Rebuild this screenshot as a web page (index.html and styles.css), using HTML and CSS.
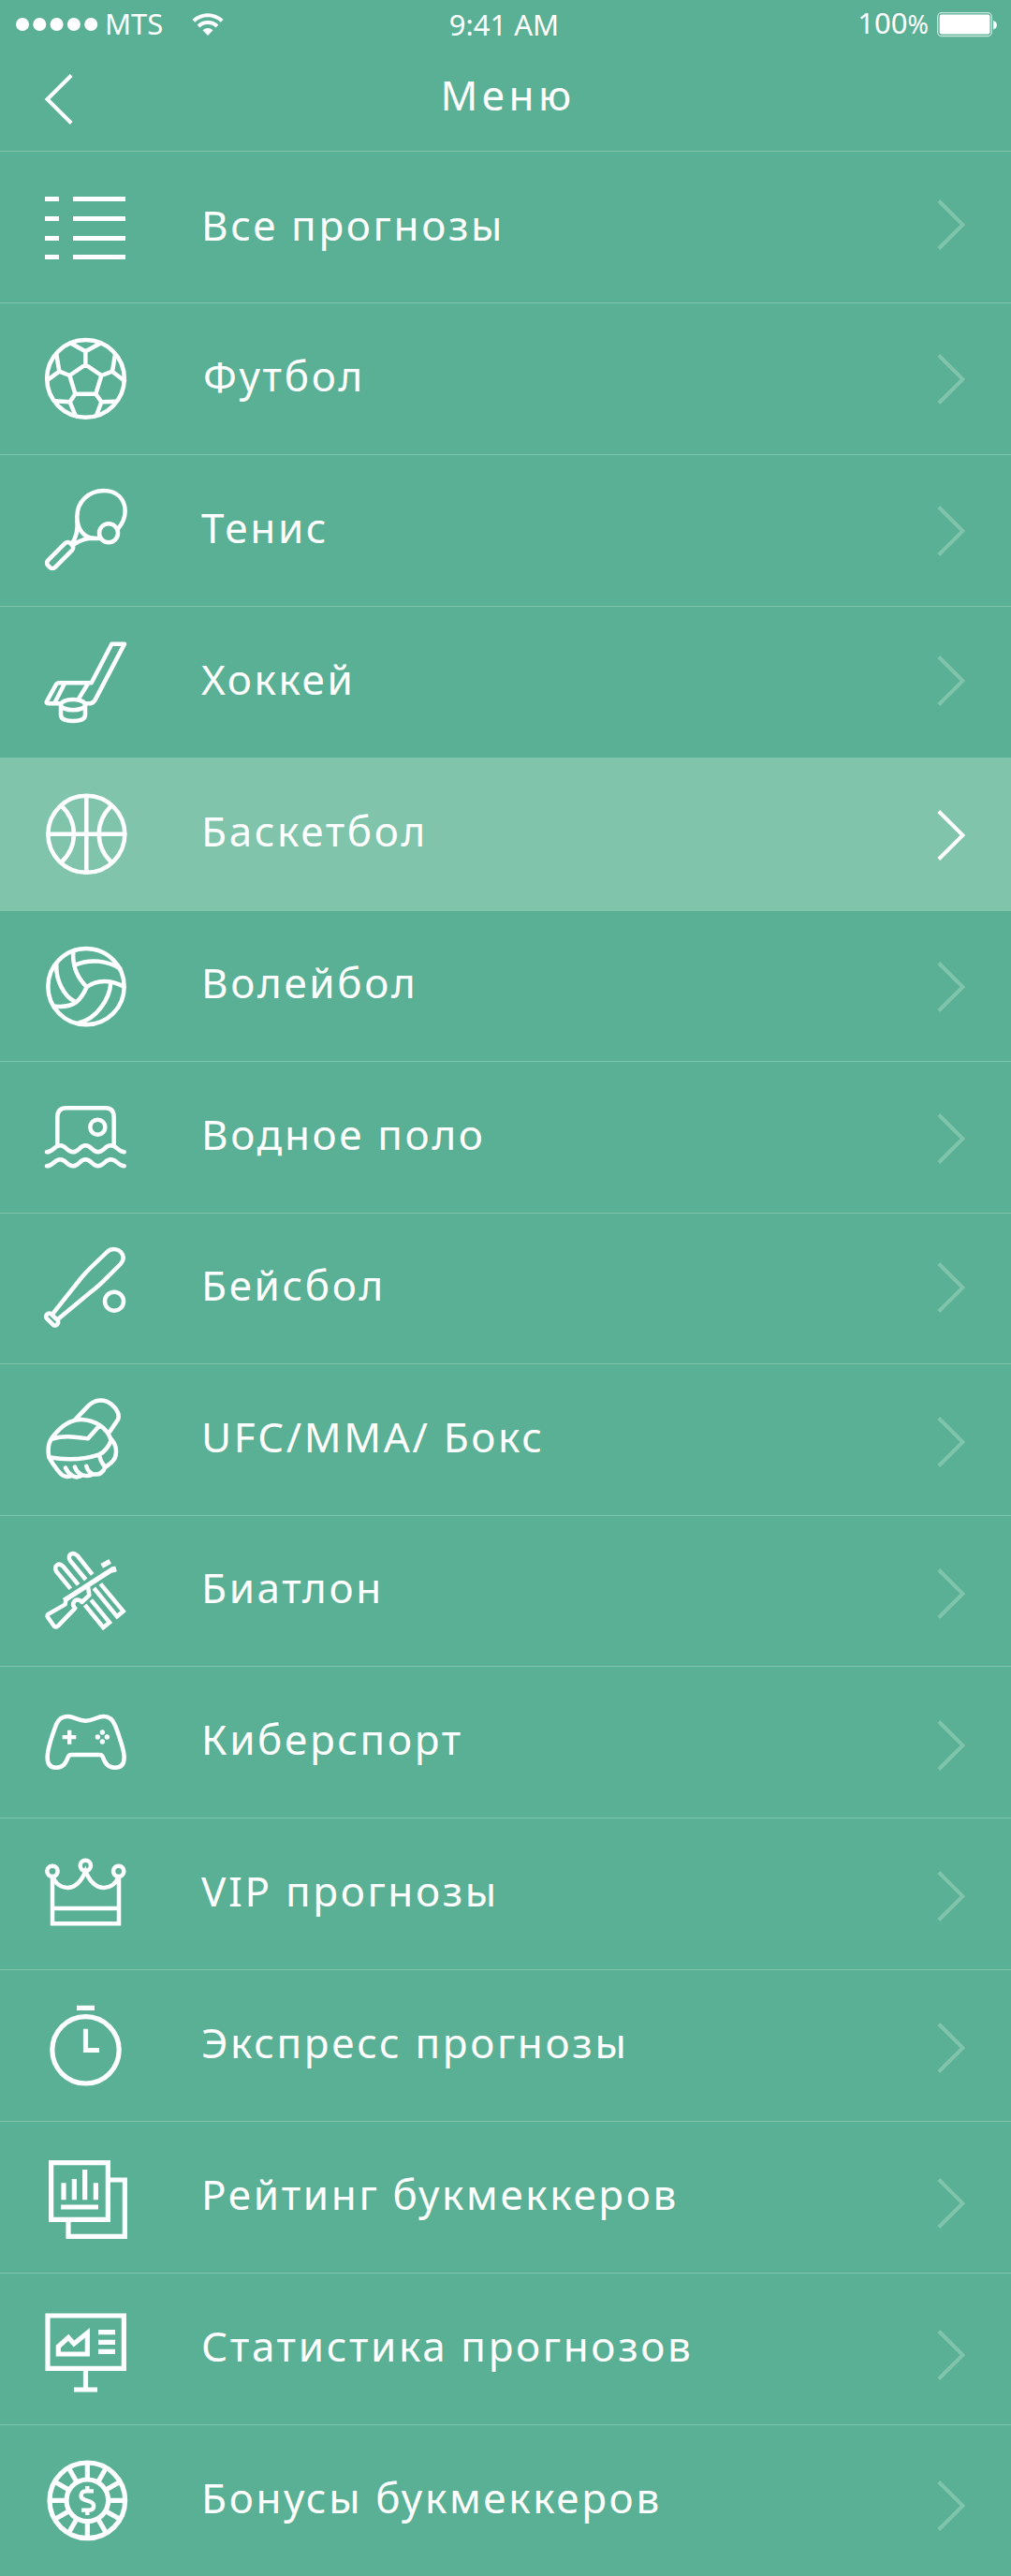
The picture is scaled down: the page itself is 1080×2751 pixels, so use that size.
FILE: index.html
```html
<!DOCTYPE html>
<html lang="ru">
<head>
<meta charset="utf-8">
<title>Меню</title>
<link rel="stylesheet" href="styles.css">
</head>
<body>
<svg class="defs" width="0" height="0" aria-hidden="true">
  <symbol id="chevron" viewBox="0 0 30 54"><path d="M1.8 1.5 27.5 27 1.8 52.5"/></symbol>
</svg>
<header class="header">
  <div class="status">
    <div class="status-left">
      <svg class="signal" viewBox="0 0 88 14"><circle cx="7" cy="7" r="7"/><circle cx="25.3" cy="7" r="7"/><circle cx="43.6" cy="7" r="7"/><circle cx="61.9" cy="7" r="7"/><circle cx="80.2" cy="7" r="7"/></svg>
      <span class="carrier">MTS</span>
      <svg class="wifi" viewBox="0 0 34 24"><path class="wifi-arc" d="M1.8 8.3C10.500.2 23.500.2 32.200 8.300M7 14C12.500 8.800 21.500 8.800 27 14"/><path class="wifi-dot" d="M11.500 18.300Q17 13.800 22.500 18.300L17 24Z"/></svg>
    </div>
    <span class="time">9:41 AM</span>
    <div class="status-right">
      <span class="charge">100<small>%</small></span>
      <svg class="battery" viewBox="0 0 65 27"><rect class="battery-case" x=".7" y=".7" width="57.600" height="24.800" rx="4"/><rect x="2.700" y="2.600" width="53.800" height="21" rx="2"/><path d="M60 9C65.200 10 65.200 17.500 60 18.500Z"/></svg>
    </div>
  </div>
  <nav class="bar">
    <svg class="back" viewBox="0 0 30 54"><path d="M28.200 1.500 2.500 27 28.200 52.500"/></svg>
    <h1 class="title">Меню</h1>
  </nav>
</header>
<ul class="menu">
  <li class="item">
    <svg class="icon solid" viewBox="45 196 92 92"><path d="M48 210h15v5h-15zM78 210h56v5h-56zM48 231h15v5h-15zM78 231h56v5h-56zM48 252h15v5h-15zM78 252h56v5h-56zM48 272h15v5h-15zM78 272h56v5h-56z"/></svg>
    <span class="label">Все прогнозы</span><svg class="chevron"><use href="#chevron"/></svg>
  </li>
  <li class="item">
    <svg class="icon" viewBox="135 84 276 276"><circle cx="274.500" cy="223" r="124"/><path d="M274 178 325 213 307 272H241L223 213ZM274 178V136L228 110M274 136 321 110M325 213 360 200 369 146M360 200 399 230M223 213 190 200 181 146M190 200 152 228M307 272 325 298 373 296M325 298 309 341M241 272 224 298 176 295M224 298 241 339"/></svg>
    <span class="label">Футбол</span><svg class="chevron"><use href="#chevron"/></svg>
  </li>
  <li class="item">
    <svg class="icon" viewBox="135 570 276 276"><path d="M379 703C394 685 401 670 401 648C401 608 374 582 333 582C284 582 247 618 247 665C247 705 268 733 302 735H318M247 676C251 712 240 738 231 751M312 735C285 731 258 740 238 753"/><circle cx="348" cy="718" r="30"/><rect x="142" y="773" width="101" height="32" rx="12" transform="rotate(-45 192.500 789)"/></svg>
    <span class="label">Тенис</span><svg class="chevron"><use href="#chevron"/></svg>
  </li>
  <li class="item">
    <svg class="icon" viewBox="135 1056 276 276"><path d="M193 1264H155Q146 1264 151 1255L178 1206Q182 1198 190 1198H293L358 1073H399L305 1252Q298 1264 288 1264H275M207 1200 175 1262M282 1200 250 1252M195 1268V1300C195 1315 215 1320 234 1320S273 1315 273 1300V1268"/><ellipse cx="234" cy="1268" rx="39" ry="17"/></svg>
    <span class="label">Хоккей</span><svg class="chevron"><use href="#chevron"/></svg>
  </li>
  <li class="item active">
    <svg class="icon" viewBox="135 132 276 276"><circle cx="277" cy="272.500" r="123"/><path d="M277 150V395M154 272H400M197 182C250 232 250 312 197 362M357 182C304 232 304 312 357 362"/></svg>
    <span class="label">Баскетбол</span><svg class="chevron"><use href="#chevron"/></svg>
  </li>
  <li class="item">
    <svg class="icon" viewBox="135 618 276 276"><circle cx="276" cy="761" r="122"/><path d="M235 648C231 700 250 735 278 762M240 692C290 670 345 678 385 703M278 762C310 738 355 738 395 760M278 762C260 802 240 830 178 824M181 690C178 740 205 790 238 808M355 748C352 800 310 865 250 878"/></svg>
    <span class="label">Волейбол</span><svg class="chevron"><use href="#chevron"/></svg>
  </li>
  <li class="item">
    <svg class="icon" viewBox="135 1104 276 276"><path d="M184 1270V1180Q184 1150 212 1150H338Q365 1150 365 1180V1270M150 1291C170 1291 174 1270 193 1270S215 1291 234 1291S255 1270 274 1270S296 1291 314 1291S336 1270 355 1270S380 1291 398 1291M150 1336C170 1336 174 1315 193 1315S215 1336 234 1336S255 1315 274 1315S296 1336 314 1336S336 1315 355 1315S380 1336 398 1336"/><circle cx="313" cy="1211" r="24"/></svg>
    <span class="label">Водное поло</span><svg class="chevron"><use href="#chevron"/></svg>
  </li>
  <li class="item">
    <svg class="icon" viewBox="135 150 276 276"><path d="M170 368 262 252C275 237 280 232 290 222L343 171C357 159 376 160 387 171C398 183 398 197 386 210L330 266C315 281 305 288 290 300L186 386"/><rect x="144" y="377" width="46" height="20" rx="9" transform="rotate(45 167 387)"/><circle cx="366" cy="329" r="30"/></svg>
    <span class="label">Бейсбол</span><svg class="chevron"><use href="#chevron"/></svg>
  </li>
  <li class="item">
    <svg class="icon" viewBox="135 633 276 276"><path d="M157 829C150 790 160 770 180 750C205 722 235 707 262 708C305 710 345 735 356 775C350 792 335 812 318 820C265 838 210 838 157 829C172 855 185 872 197 884C207 893 222 893 231 887C240 895 255 893 264 886C280 890 290 888 298 883C315 886 328 882 336 862C350 850 372 840 372 812C373 795 365 780 356 770M168 770C205 758 240 764 282 769L318 728M243 706 282 665C305 642 335 640 358 660C375 675 385 690 378 708L351 748M318 820C320 838 328 850 337 860M210 863C215 875 222 882 231 887M240 860C244 872 255 882 264 886M277 857C280 870 288 878 298 883"/></svg>
    <span class="label">UFC/MMA/ Бокс</span><svg class="chevron"><use href="#chevron"/></svg>
  </li>
  <li class="item">
    <svg class="icon sharp" viewBox="135 1119 276 276"><path d="M226 1250 181 1195C170 1177 188 1164 203 1179L251 1237M275 1221 225 1160C214 1142 232 1129 248 1144L296 1204M272 1302 331 1374 351 1358 292 1286M301 1248 375 1339 395 1322 322 1234"/><path class="barrel" d="M326 1177 353 1162M205 1288 365 1185M362 1180 367 1197"/><path class="round" d="M211 1284 209 1300 157 1330Q149 1334 153 1341L172 1368Q179 1377 186 1369L241 1312C227 1300 238 1280 256 1287L262 1293 286 1271 282 1243"/></svg>
    <span class="label">Биатлон</span><svg class="chevron"><use href="#chevron"/></svg>
  </li>
  <li class="item">
    <svg class="icon" viewBox="135 162 276 276"><path d="M274 233C300 233 310 219 333 219C352 219 362 230 370 250C385 290 398 325 398 350C398 372 388 383 368 383C345 383 335 365 330 350C328 343 324 342 318 342H230C224 342 220 343 218 350C210 370 203 383 180 383C162 383 152 372 152 350C152 325 165 285 180 245C188 227 198 219 216 219C238 219 248 233 274 233Z"/><path class="fill" d="M200 279H216V263H229V279H244V292H229V308H216V292H200Z"/><g class="fill"><circle cx="328" cy="270" r="8"/><circle cx="328" cy="300" r="8"/><circle cx="313" cy="285" r="8"/><circle cx="343" cy="285" r="8"/></g></svg>
    <span class="label">Киберспорт</span><svg class="chevron"><use href="#chevron"/></svg>
  </li>
  <li class="item">
    <svg class="icon sharp" viewBox="135 648 276 276"><circle cx="168" cy="715" r="17"/><circle cx="274" cy="697" r="17"/><circle cx="380" cy="715" r="17"/><path d="M168 734V883H381V734M168 834H381M168 732C190 780 245 785 274 715C303 785 360 780 381 732"/></svg>
    <span class="label">VIP прогнозы</span><svg class="chevron"><use href="#chevron"/></svg>
  </li>
  <li class="item">
    <svg class="icon sharp thick" viewBox="135 1134 276 276"><circle cx="274.500" cy="1288" r="107"/><path d="M246 1153H303M274.500 1220V1288.500H318"/></svg>
    <span class="label">Экспресс прогнозы</span><svg class="chevron"><use href="#chevron"/></svg>
  </li>
  <li class="item">
    <svg class="icon sharp thick" viewBox="135 180 276 276"><path d="M164 209H346V391H164ZM353 264H400V445H219V398M204 274V328M238 261V328M272 231V328M307 274V328M195 351H315"/></svg>
    <span class="label">Рейтинг букмеккеров</span><svg class="chevron"><use href="#chevron"/></svg>
  </li>
  <li class="item">
    <svg class="icon sharp thick" viewBox="135 666 276 276"><path d="M153 699H397V868H153ZM274.500 876V930M237 936H312M187 822V798L219 769 237 789 280 754V822ZM315 752H369M315 784H369M315 814H369"/></svg>
    <span class="label">Статистика прогнозов</span><svg class="chevron"><use href="#chevron"/></svg>
  </li>
  <li class="item">
    <svg class="icon sharp thick" viewBox="135 1152 276 276"><circle cx="280" cy="1291" r="121"/><circle cx="280" cy="1291" r="67"/><path d="M280 1224V1170M280 1358V1412M347 1291H401M213 1291H159M313.500 1233 340.500 1186M338 1257.500 385 1230.500M338 1324.500 385 1351.500M313.500 1349 340.500 1396M246.500 1349 219.500 1396M222 1324.500 175 1351.500M222 1257.500 175 1230.500M246.500 1233 219.500 1186"/><path class="coin" d="M300 1261H276C257 1261 254 1283 271 1289L290 1295C306 1302 303 1322 286 1322H261M280 1245V1259M280 1324V1338"/></svg>
    <span class="label">Бонусы букмеккеров</span><svg class="chevron"><use href="#chevron"/></svg>
  </li>
</ul>
</body>
</html>
```
FILE: styles.css
```css
* { box-sizing: border-box; }
body {
  margin: 0;
  background: #59b095;
  color: #fff;
  font-family: "Noto Sans", sans-serif;
}
.defs { display: block; }
svg { display: block; flex: none; overflow: visible; }

.header { height: 161px; overflow: hidden; }
.status {
  display: grid;
  grid-template-columns: 1fr auto 1fr;
  height: 53px;
  padding: 0 14px 0 17px;
  font-size: 31px;
  line-height: 42px;
}
.status-left, .status-right { display: flex; }
.status-right { justify-content: flex-end; }
.signal { width: 88px; height: 14px; margin-top: 19px; fill: #fff; }
.carrier { margin: 4px 0 0 7px; }
.wifi { width: 34px; height: 24px; margin: 14px 0 0 31px; }
.wifi-arc { fill: none; stroke: #fff; stroke-width: 4; }
.wifi-dot { fill: #fff; }
.time { margin: 5px 6px 0 0; }
.charge { margin: 3px 9px 0 0; }
.charge small { font-size: 27px; }
.battery { width: 65px; height: 27px; margin-top: 13px; fill: #fff; }
.battery .battery-case { fill: none; stroke: #c9e6dc; stroke-width: 1.300; }

.bar { display: grid; grid-template-columns: 30px 1fr 30px; padding: 0 48px; }
.back { width: 30px; height: 54px; margin-top: 26px; fill: none; stroke: #fff; stroke-width: 4; }
.title {
  margin: 18px 0 0;
  padding-left: 5px;
  font-size: 44px;
  font-weight: 400;
  line-height: 60px;
  letter-spacing: 4.400px;
  text-align: center;
}

.menu { margin: 0; padding: 0; list-style: none; }
.item {
  display: flex;
  align-items: flex-start;
  height: 162px;
  padding: 0 49px 0 45px;
  border-top: 1px solid #7fc4ab;
}
.icon {
  width: 92px;
  height: 92px;
  margin-top: 34px;
  fill: none;
  stroke: #fff;
  stroke-width: 13.500;
  stroke-linecap: round;
  stroke-linejoin: round;
}
.icon.solid, .icon .fill { fill: #fff; stroke: none; }
.icon.sharp { stroke-linecap: butt; stroke-linejoin: miter; }
.icon.sharp .round { stroke-linejoin: round; }
.icon .barrel { stroke-width: 16; }
.icon.thick { stroke-width: 15.500; }
.icon .coin { stroke-width: 13; }
.label {
  flex: 1;
  margin: 47px 0 0 78px;
  font-size: 44px;
  line-height: 60px;
  letter-spacing: .06em;
  white-space: nowrap;
}
.chevron {
  width: 30px;
  height: 54px;
  margin-top: 56px;
  fill: none;
  stroke: #7fc4ab;
  stroke-width: 4;
}

/* highlighted row covers the divider below it */
.item.active { height: 164px; background: #7fc4ab; }
.active .chevron { stroke: #fff; margin-top: 55px; }
.active + .item { height: 160px; border-top: 0; }
.active + .item .icon { margin-top: 33px; }
.active + .item .label { margin-top: 46px; }
.active + .item .chevron { margin-top: 54px; }

.item:nth-child(8), .item:nth-child(10) { height: 161px; }
.item:nth-child(1) .label { margin-top: 48px; }
.item:nth-child(2) .label { margin-left: 80px; }
.item:nth-child(8) .label, .item:nth-child(10) .label { margin-top: 46px; }
.item:nth-child(1) .chevron { margin-top: 51px; }
.item:nth-child(2) .chevron, .item:nth-child(3) .chevron { margin-top: 54px; }
.item:nth-child(4) .chevron, .item:nth-child(8) .chevron { margin-top: 52px; }
.item:nth-child(7) .chevron { margin-top: 55px; }
.item:nth-child(11) .chevron { margin-top: 57px; }
.item:nth-child(14) .chevron, .item:nth-child(15) .chevron { margin-top: 60px; }
.item:nth-child(16) .chevron { margin-top: 59px; }
```
